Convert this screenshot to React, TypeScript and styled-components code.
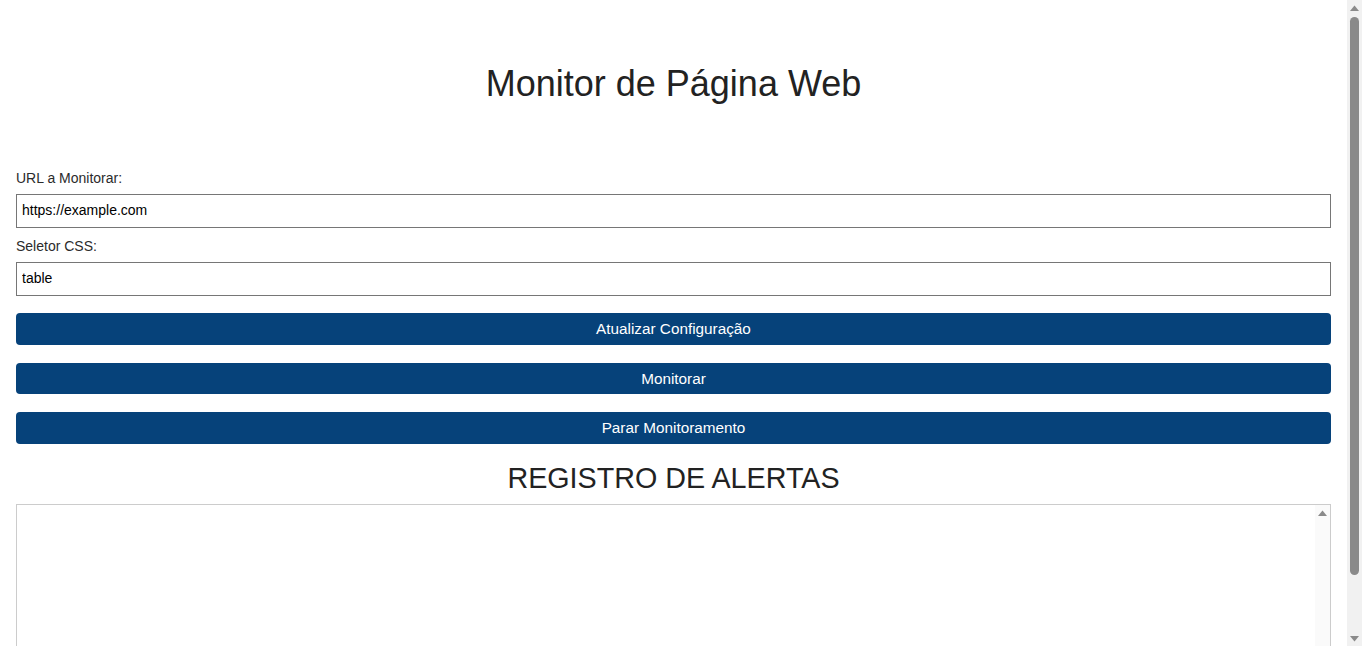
import React from "react";
import styled, { createGlobalStyle } from "styled-components";

const GlobalStyle = createGlobalStyle`
  html, body {
    margin: 0;
    padding: 0;
    background: #ffffff;
  }
  body {
    font-family: "Liberation Sans", Arial, sans-serif;
    color: #222222;
  }
  * { box-sizing: border-box; }
`;

const Page = styled.main`
  display: flex;
  flex-direction: column;
  padding: 0 31px 9px 16px;
`;

const Title = styled.h1`
  margin: 63px 0 66px;
  font-size: 36px;
  line-height: 41px;
  font-weight: 400;
  text-align: center;
  color: #222222;
`;

const Field = styled.div<{ $last?: boolean }>`
  display: flex;
  flex-direction: column;
  margin-bottom: ${(p) => (p.$last ? "17px" : "10px")};
`;

const Label = styled.label`
  display: block;
  font-size: 14px;
  line-height: 16px;
  color: #2b2b2b;
  margin-bottom: 8px;
`;

const Input = styled.input`
  width: 100%;
  height: 34px;
  padding: 6.5px 5px 9.5px;
  font-family: "Liberation Sans", Arial, sans-serif;
  font-size: 14px;
  line-height: 16px;
  color: #000000;
  border: 1px solid #767676;
  border-radius: 0;
  background: #ffffff;
  outline: none;
`;

const Buttons = styled.div`
  display: flex;
  flex-direction: column;
  gap: 18px;
`;

const Button = styled.button`
  width: 100%;
  height: 31.5px;
  padding: 0;
  border: none;
  border-radius: 4px;
  background: #06427a;
  color: #ffffff;
  font-family: "Liberation Sans", Arial, sans-serif;
  font-size: 15.3px;
  line-height: 17px;
  cursor: pointer;
`;

const SectionTitle = styled.h2`
  margin: 18.5px 0 10px;
  font-size: 28.7px;
  line-height: 32px;
  font-weight: 400;
  text-align: center;
  color: #222222;
`;

const LogBox = styled.div`
  display: flex;
  height: 200px;
  border: 1px solid #cccccc;
  background: #ffffff;
`;

const Log = styled.textarea`
  flex: 1;
  min-width: 0;
  height: 100%;
  border: none;
  padding: 8px;
  resize: none;
  overflow: hidden;
  font-family: "Liberation Sans", Arial, sans-serif;
  font-size: 14px;
  background: transparent;
  outline: none;
`;

const Track = styled.div<{ $page?: boolean }>`
  display: flex;
  flex-direction: column;
  justify-content: space-between;
  width: 15px;
  flex: none;
  background: ${(p) => (p.$page ? "#f1f1f1" : "#fafafa")};
`;

const PageScroll = styled(Track)`
  position: fixed;
  top: 0;
  right: 0;
  bottom: 0;
  z-index: 10;
  justify-content: flex-start;
`;

const ArrowButton = styled.div`
  height: 15px;
  flex: none;
  display: flex;
  align-items: center;
  justify-content: center;
`;

const Thumb = styled.div`
  height: 558px;
  margin: 2px 3px 0;
  border-radius: 5px;
  background: #8a8a8a;
`;

const Spacer = styled.div`
  flex: 1;
`;

const Arrow = ({ down, color }: { down?: boolean; color: string }) => (
  <svg width="9" height="6" viewBox="0 0 9 6">
    <polygon points={down ? "0,0 9,0 4.5,5.5" : "4.5,0.5 9,6 0,6"} fill={color} />
  </svg>
);

export default function App() {
  return (
    <>
      <GlobalStyle />
      <Page>
        <Title>Monitor de Página Web</Title>
        <Field>
          <Label htmlFor="url">URL a Monitorar:</Label>
          <Input id="url" type="text" defaultValue="https://example.com" />
        </Field>
        <Field $last>
          <Label htmlFor="selector">Seletor CSS:</Label>
          <Input id="selector" type="text" defaultValue="table" />
        </Field>
        <Buttons>
          <Button type="button">Atualizar Configuração</Button>
          <Button type="button">Monitorar</Button>
          <Button type="button">Parar Monitoramento</Button>
        </Buttons>
        <SectionTitle>REGISTRO DE ALERTAS</SectionTitle>
        <LogBox>
          <Log readOnly />
          <Track>
            <ArrowButton>
              <Arrow color="#8a8a8a" />
            </ArrowButton>
            <ArrowButton>
              <Arrow down color="#8a8a8a" />
            </ArrowButton>
          </Track>
        </LogBox>
      </Page>
      <PageScroll $page>
        <ArrowButton>
          <Arrow color="#8a8a8a" />
        </ArrowButton>
        <Thumb />
        <Spacer />
        <ArrowButton>
          <Arrow down color="#8a8a8a" />
        </ArrowButton>
      </PageScroll>
    </>
  );
}
